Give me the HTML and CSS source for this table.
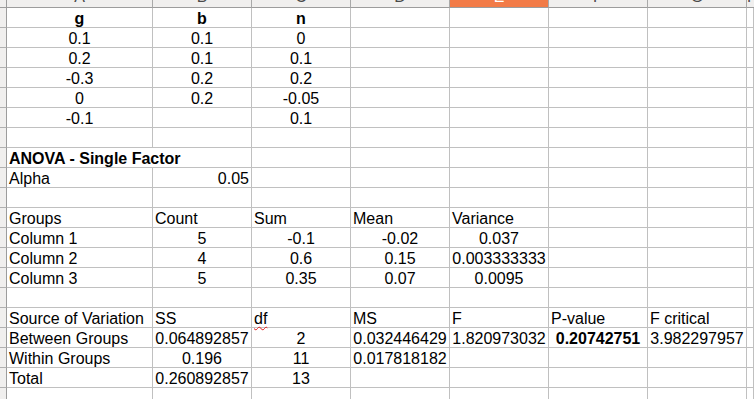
FILE: index.html
```html
<!DOCTYPE html>
<html>
<head>
<meta charset="utf-8">
<link rel="stylesheet" href="styles.css">
</head>
<body>
<div class="sheet">
  <div class="ch corner"></div>
  <div class="ch"><span>A</span></div>
  <div class="ch"><span>B</span></div>
  <div class="ch"><span>C</span></div>
  <div class="ch"><span>D</span></div>
  <div class="ch sel"><span>E</span></div>
  <div class="ch"><span>F</span></div>
  <div class="ch"><span>G</span></div>
  <div class="ch last"><span>H</span></div>

  <div class="rh"></div><div class="c m b">g</div><div class="c m b">b</div><div class="c m b">n</div><div class="c"></div><div class="c"></div><div class="c"></div><div class="c"></div><div class="c"></div>
  <div class="rh"></div><div class="c m">0.1</div><div class="c m">0.1</div><div class="c m">0</div><div class="c"></div><div class="c"></div><div class="c"></div><div class="c"></div><div class="c"></div>
  <div class="rh"></div><div class="c m">0.2</div><div class="c m">0.1</div><div class="c m">0.1</div><div class="c"></div><div class="c"></div><div class="c"></div><div class="c"></div><div class="c"></div>
  <div class="rh"></div><div class="c m">-0.3</div><div class="c m">0.2</div><div class="c m">0.2</div><div class="c"></div><div class="c"></div><div class="c"></div><div class="c"></div><div class="c"></div>
  <div class="rh"></div><div class="c m">0</div><div class="c m">0.2</div><div class="c m">-0.05</div><div class="c"></div><div class="c"></div><div class="c"></div><div class="c"></div><div class="c"></div>
  <div class="rh"></div><div class="c m">-0.1</div><div class="c"></div><div class="c m">0.1</div><div class="c"></div><div class="c"></div><div class="c"></div><div class="c"></div><div class="c"></div>
  <div class="rh"></div><div class="c"></div><div class="c"></div><div class="c"></div><div class="c"></div><div class="c"></div><div class="c"></div><div class="c"></div><div class="c"></div>
  <div class="rh"></div><div class="c l b span2">ANOVA - Single Factor</div><div class="c"></div><div class="c"></div><div class="c"></div><div class="c"></div><div class="c"></div><div class="c"></div>
  <div class="rh"></div><div class="c l">Alpha</div><div class="c r">0.05</div><div class="c"></div><div class="c"></div><div class="c"></div><div class="c"></div><div class="c"></div><div class="c"></div>
  <div class="rh"></div><div class="c"></div><div class="c"></div><div class="c"></div><div class="c"></div><div class="c"></div><div class="c"></div><div class="c"></div><div class="c"></div>
  <div class="rh"></div><div class="c l">Groups</div><div class="c l">Count</div><div class="c l">Sum</div><div class="c l">Mean</div><div class="c l">Variance</div><div class="c"></div><div class="c"></div><div class="c"></div>
  <div class="rh"></div><div class="c l">Column 1</div><div class="c m">5</div><div class="c m">-0.1</div><div class="c m">-0.02</div><div class="c m">0.037</div><div class="c"></div><div class="c"></div><div class="c"></div>
  <div class="rh"></div><div class="c l">Column 2</div><div class="c m">4</div><div class="c m">0.6</div><div class="c m">0.15</div><div class="c m">0.003333333</div><div class="c"></div><div class="c"></div><div class="c"></div>
  <div class="rh"></div><div class="c l">Column 3</div><div class="c m">5</div><div class="c m">0.35</div><div class="c m">0.07</div><div class="c m">0.0095</div><div class="c"></div><div class="c"></div><div class="c"></div>
  <div class="rh"></div><div class="c"></div><div class="c"></div><div class="c"></div><div class="c"></div><div class="c"></div><div class="c"></div><div class="c"></div><div class="c"></div>
  <div class="rh"></div><div class="c l">Source of Variation</div><div class="c l">SS</div><div class="c l"><span class="spell">df</span></div><div class="c l">MS</div><div class="c l">F</div><div class="c l">P-value</div><div class="c l">F critical</div><div class="c"></div>
  <div class="rh"></div><div class="c l">Between Groups</div><div class="c m">0.064892857</div><div class="c m">2</div><div class="c m">0.032446429</div><div class="c m">1.820973032</div><div class="c m b">0.20742751</div><div class="c m">3.982297957</div><div class="c"></div>
  <div class="rh"></div><div class="c l">Within Groups</div><div class="c m">0.196</div><div class="c m">11</div><div class="c m">0.017818182</div><div class="c"></div><div class="c"></div><div class="c"></div><div class="c"></div>
  <div class="rh"></div><div class="c l">Total</div><div class="c m">0.260892857</div><div class="c m">13</div><div class="c"></div><div class="c"></div><div class="c"></div><div class="c"></div><div class="c"></div>
  <div class="rh"></div><div class="c"></div><div class="c"></div><div class="c"></div><div class="c"></div><div class="c"></div><div class="c"></div><div class="c"></div><div class="c"></div>
</div>
</body>
</html>
```
FILE: styles.css
```css
html, body {
  margin: 0;
  padding: 0;
  background: #ffffff;
  overflow: hidden;
}

.sheet {
  display: grid;
  grid-template-columns: 7px 146px repeat(6, 99px) 1fr;
  grid-template-rows: 8px;
  grid-auto-rows: 20px;
  width: 754px;
  height: 399px;
  overflow: hidden;
  font-family: "Liberation Sans", Arial, sans-serif;
  font-size: 16px;
  color: #000000;
}

.ch {
  box-sizing: border-box;
  background: #f0efee;
  border-right: 1px solid #a9a9a9;
  border-bottom: 1px solid #9c9c9c;
  overflow: hidden;
  text-align: center;
  color: #4a4a4a;
  line-height: 16px;
}

.ch span {
  display: block;
  margin-top: -11px;
}

.ch.sel {
  background: #f27b47;
  color: #ffffff;
}

.ch.last {
  border-right: none;
}

.corner {
  border-right-color: #9c9c9c;
}

.rh {
  box-sizing: border-box;
  background: #f0efee;
  border-right: 1px solid #9c9c9c;
  border-bottom: 1px solid #b0b0b0;
}

.c {
  box-sizing: border-box;
  border-right: 1px solid #c0c0c0;
  border-bottom: 1px solid #c0c0c0;
  line-height: 21px;
  white-space: nowrap;
  padding: 0 2px;
}

.span2 {
  grid-column: span 2;
}

.l { text-align: left; }
.r { text-align: right; }
.m { text-align: center; padding: 0; }
.b { font-weight: bold; }

.spell {
  text-decoration: underline wavy #e01b1b;
  text-decoration-thickness: 1px;
  text-underline-offset: 2px;
}
```
